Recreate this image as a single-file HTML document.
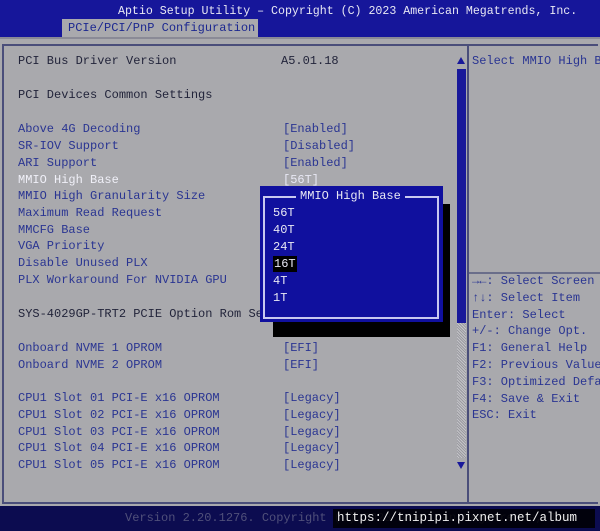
<!DOCTYPE html>
<html><head><style>
body{margin:0;width:600px;height:531px;overflow:hidden;background:#a9a9ad;font-family:"Liberation Mono",monospace;font-size:12px;position:relative}
div{position:absolute;white-space:pre;line-height:16px}
.d{color:#22243a}.b{color:#2a3592}.w{color:#e8e8f4}
</style></head><body>
<div style="left:0;top:0;width:600px;height:37px;background:#16169a"></div>
<div class="w" style="left:118px;top:4px;font-size:11.6px">Aptio Setup Utility – Copyright (C) 2023 American Megatrends, Inc.</div>
<div style="left:62px;top:19px;width:196px;height:18px;background:#a9a9ad"></div>
<div class="b" style="left:68px;top:20px;color:#1c2890">PCIe/PCI/PnP Configuration</div>
<div style="left:0;top:37px;width:600px;height:2px;background:#8a8a96"></div>
<div style="left:2px;top:44px;width:594px;height:456px;border:2px solid #4a4e7a;border-right:none"></div>
<div style="left:467px;top:44px;width:2px;height:458px;background:#4a4e7a"></div>
<div style="left:469px;top:272px;width:131px;height:2px;background:#6a6e8a"></div>
<div class="d" style="left:18px;top:53px">PCI Bus Driver Version</div>
<div class="d" style="left:281px;top:53px">A5.01.18</div>
<div class="d" style="left:18px;top:87px">PCI Devices Common Settings</div>
<div class="b" style="left:18px;top:121px;line-height:16.8px">Above 4G Decoding
SR-IOV Support
ARI Support</div>
<div class="w" style="left:18px;top:172px;color:#f0f0f8">MMIO High Base</div>
<div class="b" style="left:18px;top:188px;line-height:16.8px">MMIO High Granularity Size
Maximum Read Request
MMCFG Base
VGA Priority
Disable Unused PLX
PLX Workaround For NVIDIA GPU</div>
<div class="b" style="left:283px;top:121px;line-height:16.8px">[Enabled]
[Disabled]
[Enabled]</div>
<div class="w" style="left:283px;top:172px">[56T]</div>
<div class="d" style="left:18px;top:306px">SYS-4029GP-TRT2 PCIE Option Rom Se</div>
<div class="b" style="left:18px;top:340px;line-height:16.8px">Onboard NVME 1 OPROM
Onboard NVME 2 OPROM</div>
<div class="b" style="left:283px;top:340px;line-height:16.8px">[EFI]
[EFI]</div>
<div class="b" style="left:18px;top:390px;line-height:16.8px">CPU1 Slot 01 PCI-E x16 OPROM
CPU1 Slot 02 PCI-E x16 OPROM
CPU1 Slot 03 PCI-E x16 OPROM
CPU1 Slot 04 PCI-E x16 OPROM
CPU1 Slot 05 PCI-E x16 OPROM</div>
<div class="b" style="left:283px;top:390px;line-height:16.8px">[Legacy]
[Legacy]
[Legacy]
[Legacy]
[Legacy]</div>
<div class="b" style="left:472px;top:53px">Select MMIO High Base</div>
<div class="b" style="left:472px;top:273px;line-height:16.8px">→←: Select Screen
↑↓: Select Item
Enter: Select
+/-: Change Opt.
F1: General Help
F2: Previous Values
F3: Optimized Defaults
F4: Save &amp; Exit
ESC: Exit</div>
<div style="left:457px;top:69px;width:9px;height:254px;background:#18189a"></div>
<div style="left:457px;top:323px;width:9px;height:135px;background:repeating-linear-gradient(45deg,#9a9aa0 0 1px,#c4c4c8 1px 2px)"></div>
<div style="left:457px;top:57px;width:0;height:0;border-left:4px solid transparent;border-right:4px solid transparent;border-bottom:7px solid #18189a"></div>
<div style="left:457px;top:462px;width:0;height:0;border-left:4px solid transparent;border-right:4px solid transparent;border-top:7px solid #18189a"></div>
<div style="left:273px;top:204px;width:177px;height:133px;background:#000"></div>
<div style="left:260px;top:186px;width:183px;height:136px;background:#10109e"></div>
<div style="left:263px;top:196px;width:172px;height:119px;border:2px solid #c8c8f0"></div>
<div class="w" style="left:296px;top:188px;background:#10109e;padding:0 4px">MMIO High Base</div>
<div class="w" style="left:273px;top:205px;line-height:16.8px">56T
40T
24T</div>
<div class="w" style="left:273px;top:256px;background:#000;padding:0 1px">16T</div>
<div class="w" style="left:273px;top:273px;line-height:16.8px">4T
1T</div>
<div style="left:0;top:506px;width:600px;height:25px;background:#0c0c50"></div>
<div style="left:125px;top:510px;color:#50507a">Version 2.20.1276. Copyright (C) 2023 American Megatrends, Inc.</div>
<div style="left:333px;top:509px;width:262px;height:19px;background:#000;opacity:.85"></div>
<div style="left:337px;top:510px;color:#f0f0f0;font-size:12.5px">https://tnipipi.pixnet.net/album</div>
</body></html>
